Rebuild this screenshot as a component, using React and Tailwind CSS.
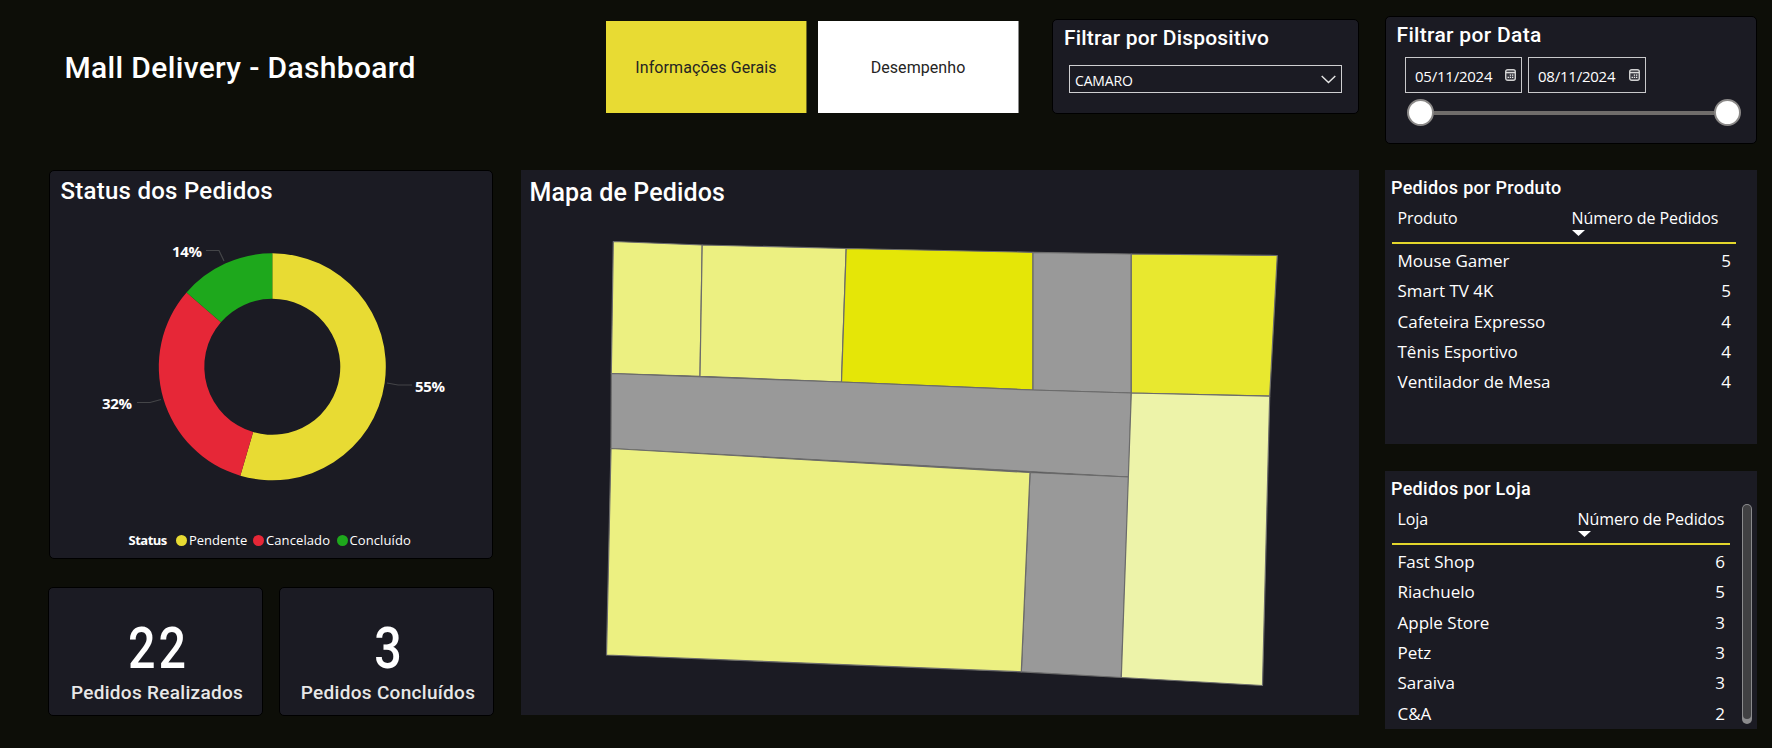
const HEAD = "font-['Roboto',sans-serif] whitespace-nowrap";
const BODY = "font-['Open_Sans',sans-serif] whitespace-nowrap";

const produtos = [
  ["Mouse Gamer", 5],
  ["Smart TV 4K", 5],
  ["Cafeteira Expresso", 4],
  ["Tênis Esportivo", 4],
  ["Ventilador de Mesa", 4],
];

const lojas = [
  ["Fast Shop", 6],
  ["Riachuelo", 5],
  ["Apple Store", 3],
  ["Petz", 3],
  ["Saraiva", 3],
  ["C&A", 2],
];

const status = [
  { nome: "Pendente", valor: 12, cor: "#e8db33" },
  { nome: "Cancelado", valor: 7, cor: "#e62737" },
  { nome: "Concluído", valor: 3, cor: "#1ea81c" },
];

// Map regions in panel coordinates.
const regioes = [
  ["92.3,71.5 181.2,75 179,206.3 90.3,203.5", "#ecf081"],
  ["181.2,75 325.2,78.5 320.5,212 179,206.3", "#ecf081"],
  ["325.2,78.5 512,82.3 512,220 320.5,212", "#e5e607"],
  ["512,82.3 610.3,84 610.3,223 512,220", "#999999"],
  ["610.3,84 756.3,85.5 748.7,226.2 610.3,223", "#e8e82f"],
  ["90.3,203.5 320.5,212 512,220 610.3,223 608,307 509,301.5 90,278.5", "#999999"],
  ["509,302.5 608,307 600.3,507.5 500.3,501.8", "#999999"],
  ["90,278.5 509,302.5 500.3,501.8 85.5,485", "#ecf081"],
  ["610.3,223 748.7,226.2 741.5,515.5 600.3,507.5", "#edf3a9"],
];

function ponto(cx, cy, r, a) {
  return `${(cx + r * Math.sin(a)).toFixed(2)} ${(cy - r * Math.cos(a)).toFixed(2)}`;
}

function Rosca({ cx, cy, externo, interno }) {
  const total = status.reduce((s, d) => s + d.valor, 0);
  let inicio = 0;
  return status.map((d) => {
    const a0 = inicio;
    const a1 = a0 + (d.valor / total) * Math.PI * 2;
    inicio = a1;
    const grande = a1 - a0 > Math.PI ? 1 : 0;
    return (
      <path
        key={d.nome}
        fill={d.cor}
        d={`M${ponto(cx, cy, externo, a0)} A${externo} ${externo} 0 ${grande} 1 ${ponto(cx, cy, externo, a1)} L${ponto(cx, cy, interno, a1)} A${interno} ${interno} 0 ${grande} 0 ${ponto(cx, cy, interno, a0)} Z`}
      />
    );
  });
}

function GraficoStatus() {
  return (
    <svg width="442" height="310" className="block" viewBox="50 210 442 310">
      <Rosca cx={272.3} cy={366.8} externo={113.5} interno={68} />
      <g fill="none" stroke="#444548" strokeWidth="1.2">
        <path d="M206 250.5H219L224 261" />
        <path d="M387 383L398 385H412" />
        <path d="M137 402.5H150L161 399.5" />
      </g>
      <g fill="#fff" className="font-['Open_Sans',sans-serif] text-[15px] font-bold tracking-[-0.3px]">
        <text x="172" y="257">14%</text>
        <text x="415" y="392">55%</text>
        <text x="102" y="409">32%</text>
      </g>
    </svg>
  );
}

function CalendarIcon() {
  return (
    <svg width="11" height="12" viewBox="0 0 11 12" className="shrink-0">
      <rect x="0.7" y="0.7" width="9.6" height="10.6" rx="2" fill="#3a3a42" stroke="#d0d0d0" strokeWidth="1.4" />
      <path d="M1 3.6H10" stroke="#dcdcdc" strokeWidth="1.4" />
      <path d="M4.8 6.1h1.3M7 6.1h1.3M2.6 8.4h1.3M4.8 8.4h1.3M7 8.4h1.3" stroke="#f0f0f0" strokeWidth="1.4" />
    </svg>
  );
}

function CampoData({ valor, largura }) {
  return (
    <div className={`${largura} flex h-9 items-center border border-[#c9c9cb] pl-[9px] pr-[5px]`}>
      <span className={`${BODY} flex-1 pt-0.5 text-[15px] leading-5 tracking-[-0.23px] text-white`}>{valor}</span>
      <CalendarIcon />
    </div>
  );
}

function Tabela({ coluna, linhas, largura, numero }) {
  return (
    <div className={`${largura} ${BODY} ml-[7px] mt-[7px] text-white`}>
      <div className="flex h-[39px] justify-between border-b-2 border-[#e3d62c] pl-[5.5px] pt-px text-base leading-6 tracking-[-0.09px]">
        <span>{coluna}</span>
        <div className={numero}>
          <div>Número de Pedidos</div>
          <svg width="13" height="6" viewBox="0 0 13 6" className="block">
            <path d="M0 0H13L6.5 6Z" fill="#fff" />
          </svg>
        </div>
      </div>
      <div className="pt-0.5">
        {linhas.map(([nome, n]) => (
          <div key={nome} className="flex h-[30.33px] justify-between pl-[5.5px] pr-[5px] text-[17px] leading-[30px]">
            <span>{nome}</span>
            <span>{n}</span>
          </div>
        ))}
      </div>
    </div>
  );
}

function Cartao({ valor, rotulo }) {
  return (
    <div className="flex h-[129px] w-[215px] flex-col items-center rounded-[5px] border border-black bg-[#1b1b23] pt-[31px]">
      <div className={`${HEAD} scale-x-[0.85] pl-[7px] text-[57px] font-medium leading-[60px] tracking-[3.6px] text-white`}>
        {valor}
      </div>
      <div className={`${HEAD} mt-0.5 pl-[3px] text-[19px] font-medium leading-6 tracking-[0.3px] text-[#e8e8e8]`}>
        {rotulo}
      </div>
    </div>
  );
}

export default function App() {
  return (
    <div className="flex h-[748px] w-[1772px] overflow-hidden bg-[#0d0e08] pl-12">
      {/* Left column */}
      <div className="w-[446px] pt-[50px]">
        <h1 className={`${HEAD} pl-[16.5px] text-[30px] font-medium leading-9 tracking-[0.34px] text-white`}>
          Mall Delivery - Dashboard
        </h1>
        <section className="ml-px mt-[84px] h-[389px] w-[444px] rounded-[5px] border border-black bg-[#1b1b23] pt-1.5">
          <h2 className={`${HEAD} pl-[10.5px] text-[24px] font-medium leading-7 tracking-[0.26px] text-white`}>
            Status dos Pedidos
          </h2>
          <div className="mt-[5px]">
            <GraficoStatus />
          </div>
          <div className={`${BODY} mt-[10px] flex h-5 items-center pl-[78.5px] text-[13px] leading-5 text-white`}>
            <span className="w-[47.5px] font-bold tracking-[-0.5px]">Status</span>
            <span className="mr-[2px] h-[11px] w-[11px] rounded-full bg-[#e8db33]" />
            <span className="w-[64px]">Pendente</span>
            <span className="mr-[2px] h-[11px] w-[11px] rounded-full bg-[#e62737]" />
            <span className="w-[70.5px] tracking-[0.1px]">Cancelado</span>
            <span className="mr-[2px] h-[11px] w-[11px] rounded-full bg-[#1ea81c]" />
            <span className="tracking-[0.1px]">Concluído</span>
          </div>
        </section>
        <div className="mt-7 flex justify-between">
          <Cartao valor="22" rotulo="Pedidos Realizados" />
          <Cartao valor="3" rotulo="Pedidos Concluídos" />
        </div>
      </div>

      {/* Middle column */}
      <div className="ml-[27px] w-[838px]">
        <div className="flex h-[170px] items-start pl-[85px]">
          <button className={`${HEAD} mt-[21px] h-[92px] w-[201px] border-r border-[#6f6a20] bg-[#e8db33] pt-0.5 text-base tracking-[0.1px] text-[#252423]`}>
            Informações Gerais
          </button>
          <button className={`${HEAD} ml-[11px] mt-[21px] h-[92px] w-[201px] border-r border-[#8a8a8a] bg-white pt-0.5 text-base tracking-[0.07px] text-[#252423]`}>
            Desempenho
          </button>
          <section className="ml-[33px] mt-[19px] h-[95px] w-[307px] rounded-[5px] border border-black bg-[#1b1b23] pl-2.5 pt-1.5">
            <h2 className={`${HEAD} pl-px text-[21px] font-medium leading-6 tracking-[0.18px] text-white`}>
              Filtrar por Dispositivo
            </h2>
            <div className="ml-1.5 mt-[15px] flex h-7 w-[273px] items-center justify-between border border-[#cfcfd1] pl-[5px] pr-[5px]">
              <span className={`${BODY} pt-1 text-[14px] leading-5 tracking-[-0.15px] text-white`}>CAMARO</span>
              <svg width="15" height="9" viewBox="0 0 15 9" fill="none" stroke="#e6e6e6" strokeWidth="1.4">
                <path d="M0.7 0.9L7.5 7.6L14.3 0.9" />
              </svg>
            </div>
          </section>
        </div>
        <section className="h-[545px] w-[838px] bg-[#1b1b23] pt-[9px]">
          <h2 className={`${HEAD} pl-[8.5px] text-[25px] font-medium leading-7 tracking-[0.13px] text-white`}>
            Mapa de Pedidos
          </h2>
          <svg width="838" height="508" viewBox="0 37 838 508" className="block">
            {regioes.map(([pontos, cor]) => (
              <polygon key={pontos} points={pontos} fill={cor} stroke="#6b6b6b" strokeWidth="1.2" strokeLinejoin="round" />
            ))}
          </svg>
        </section>
      </div>

      {/* Right column */}
      <div className="ml-[26px] w-[372px] pt-4">
        <section className="h-32 rounded-[5px] border border-black bg-[#1b1b23] pt-1.5">
          <h2 className={`${HEAD} pl-[10.5px] text-[21px] font-medium leading-6 tracking-[0.32px] text-white`}>
            Filtrar por Data
          </h2>
          <div className="ml-[19px] mt-[10px] flex gap-[6px]">
            <CampoData valor="05/11/2024" largura="w-[117px]" />
            <CampoData valor="08/11/2024" largura="w-[118px]" />
          </div>
          <div className="ml-[21px] mt-[6px] flex h-[27px] w-[334px] items-center">
            <span className="h-[27px] w-[27px] shrink-0 rounded-full border-2 border-[#8b8988] bg-white" />
            <span className="h-1 flex-1 bg-[#706d6b]" />
            <span className="h-[27px] w-[27px] shrink-0 rounded-full border-2 border-[#8b8988] bg-white" />
          </div>
        </section>

        <section className="mt-[26px] h-[274px] bg-[#1b1b23] pt-2">
          <h2 className={`${HEAD} pl-1.5 text-[18px] font-medium leading-5 tracking-[0.29px] text-white`}>
            Pedidos por Produto
          </h2>
          <Tabela coluna="Produto" linhas={produtos} largura="w-[344px]" numero="w-[164.5px]" />
        </section>

        <section className="mt-[27px] flex h-[258px] justify-between overflow-hidden bg-[#1b1b23] pr-[5px]">
          <div className="pt-2">
            <h2 className={`${HEAD} pl-1.5 text-[18px] font-medium leading-5 tracking-[0.3px] text-white`}>
              Pedidos por Loja
            </h2>
            <Tabela coluna="Loja" linhas={lojas} largura="w-[338px]" numero="w-[152.5px]" />
          </div>
          <div className="mt-[33px] h-[220px] w-[10px] rounded-full bg-[#8b8b8d] p-px">
            <div className="h-[214px] rounded-full bg-[#414143]" />
          </div>
        </section>
      </div>
    </div>
  );
}
